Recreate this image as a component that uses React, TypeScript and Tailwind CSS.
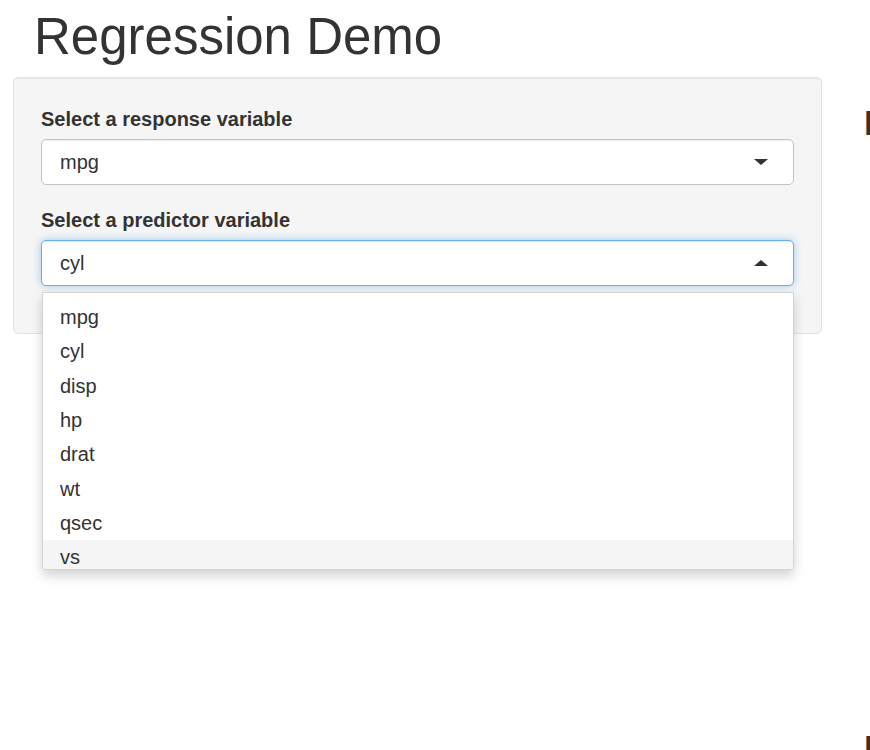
import { useState } from "react";

const variableOptions = ["mpg", "cyl", "disp", "hp", "drat", "wt", "qsec", "vs"];

function Caret({ up }: { up?: boolean }) {
  return (
    <svg width="14" height="6" viewBox="0 0 14 6" className="shrink-0 fill-[#333]">
      {up ? <polygon points="0,6 14,6 7,0" /> : <polygon points="0,0 14,0 7,6" />}
    </svg>
  );
}

export default function App() {
  const [response] = useState("mpg");
  const [predictor] = useState("cyl");
  const [hovered, setHovered] = useState("vs");

  return (
    <div className="h-[750px] w-full overflow-hidden bg-white font-['Liberation_Sans','Helvetica',sans-serif] text-[#333]">
      <div className="flex w-[1300px]">
        <div className="w-[822px] shrink-0 pl-[13px]">
          <h1 className="ml-[21px] pt-[9px] text-[51px] leading-[56px] font-normal">
            Regression Demo
          </h1>

          <div className="mt-[12px] rounded-[5px] border border-[#e3e3e3] bg-[#f5f5f5] px-[27px] pt-[27px] pb-[47px] shadow-[inset_0_1px_1px_rgba(0,0,0,0.05)]">
            <label className="block text-[20px] leading-[28px] font-bold">
              Select a response variable
            </label>
            <div className="mt-[6px] flex h-[46px] items-center justify-between rounded-[5px] border border-[#c4c4c4] bg-white pr-[25px] pl-[18px] text-[20px] shadow-[inset_0_1px_1px_rgba(0,0,0,0.075)]">
              <span>{response}</span>
              <Caret />
            </div>

            <label className="mt-[21px] block text-[20px] leading-[28px] font-bold">
              Select a predictor variable
            </label>
            <div className="relative mt-[6px]">
              <div className="flex h-[46px] items-center justify-between rounded-[5px] border border-[#66afe9] bg-white pr-[25px] pl-[18px] text-[20px] shadow-[inset_0_1px_1px_rgba(0,0,0,0.075),0_0_8px_rgba(102,175,233,0.6)]">
                <span>{predictor}</span>
                <Caret up />
              </div>

              <div className="absolute top-[52px] right-0 left-[1px] z-10 h-[278px] overflow-hidden rounded-b-[4px] border border-[#d4d4d4] bg-white pt-[7px] shadow-[0_6px_12px_rgba(0,0,0,0.175)]">
                {variableOptions.map((option) => (
                  <div
                    key={option}
                    onMouseEnter={() => setHovered(option)}
                    className={`flex h-[34.3px] items-center pl-[17px] text-[20px] ${
                      hovered === option ? "bg-[#f5f5f5]" : "bg-white"
                    }`}
                  >
                    {option}
                  </div>
                ))}
              </div>
            </div>
          </div>
        </div>

        <div className="ml-[42px] w-[400px] shrink-0 pt-[104px]">
          <h3 className="text-[35px] leading-[38.5px] font-bold">Plot</h3>
          <div className="h-[586px]" />
          <h3 className="text-[35px] leading-[38.5px] font-bold">Regression Summary</h3>
        </div>
      </div>
    </div>
  );
}
